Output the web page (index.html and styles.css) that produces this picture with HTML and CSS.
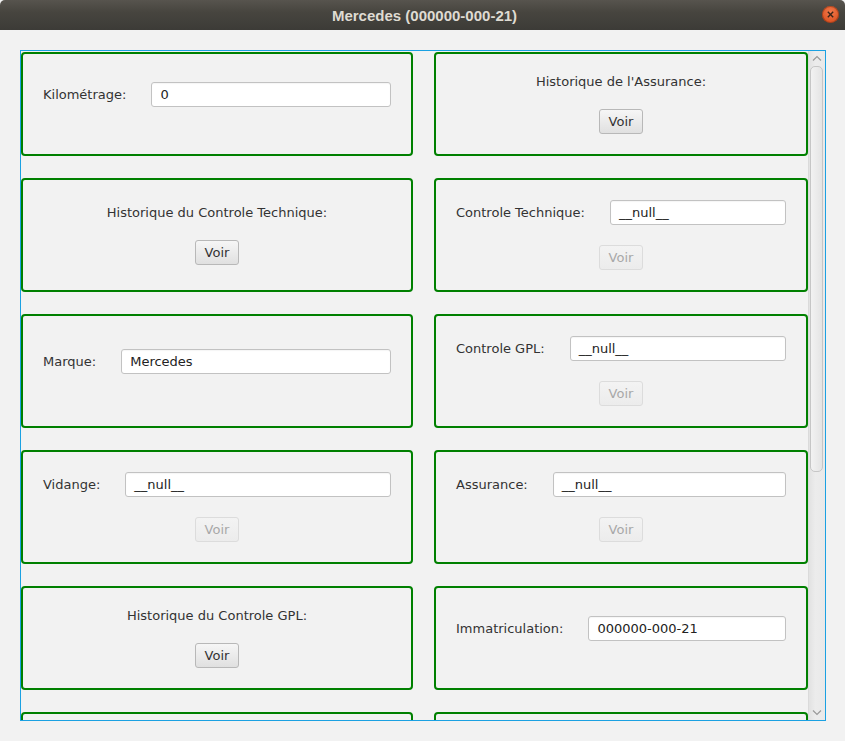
FILE: index.html
```html
<!DOCTYPE html>
<html lang="fr">
<head>
<meta charset="utf-8">
<title>Mercedes (000000-000-21)</title>
<link rel="stylesheet" href="styles.css">
</head>
<body>
<div class="window">
  <header class="titlebar">
    <span class="title">Mercedes (000000-000-21)</span>
    <span class="close"><svg width="17" height="17" viewBox="0 0 17 17"><line x1="5.8" y1="5.8" x2="11.2" y2="11.2" stroke="#3a2418" stroke-width="1.4"/><line x1="11.2" y1="5.8" x2="5.8" y2="11.2" stroke="#3a2418" stroke-width="1.4"/></svg></span>
  </header>
  <main class="content">
    <div class="scrollpane">
      <div class="viewport">
        <div class="grid">
          <section class="card">
            <div class="row"><span class="label">Kilométrage:</span><span class="input">0</span></div>
            <div class="ghost"></div>
          </section>
          <section class="card">
            <div class="heading">Historique de l'Assurance:</div>
            <div class="btn-row"><span class="btn">Voir</span></div>
          </section>

          <section class="card">
            <div class="heading">Historique du Controle Technique:</div>
            <div class="btn-row"><span class="btn">Voir</span></div>
          </section>
          <section class="card">
            <div class="row"><span class="label">Controle Technique:</span><span class="input">__null__</span></div>
            <div class="btn-row"><span class="btn disabled">Voir</span></div>
          </section>

          <section class="card">
            <div class="row"><span class="label">Marque:</span><span class="input">Mercedes</span></div>
            <div class="ghost"></div>
          </section>
          <section class="card">
            <div class="row"><span class="label">Controle GPL:</span><span class="input">__null__</span></div>
            <div class="btn-row"><span class="btn disabled">Voir</span></div>
          </section>

          <section class="card">
            <div class="row"><span class="label">Vidange:</span><span class="input">__null__</span></div>
            <div class="btn-row"><span class="btn disabled">Voir</span></div>
          </section>
          <section class="card">
            <div class="row"><span class="label">Assurance:</span><span class="input">__null__</span></div>
            <div class="btn-row"><span class="btn disabled">Voir</span></div>
          </section>

          <section class="card">
            <div class="heading">Historique du Controle GPL:</div>
            <div class="btn-row"><span class="btn">Voir</span></div>
          </section>
          <section class="card">
            <div class="row"><span class="label">Immatriculation:</span><span class="input">000000-000-21</span></div>
            <div class="ghost"></div>
          </section>

          <section class="card tall"></section>
          <section class="card tall"></section>
        </div>
      </div>
      <div class="scrollbar">
        <div class="arrow"><svg width="10" height="6" viewBox="0 0 10 6"><polyline points="1,5.5 5,1.5 9,5.5" fill="none" stroke="#9a9a9a" stroke-width="1.2"/></svg></div>
        <div class="track"><div class="thumb"></div></div>
        <div class="arrow"><svg width="10" height="6" viewBox="0 0 10 6"><polyline points="1,0.5 5,4.5 9,0.5" fill="none" stroke="#9a9a9a" stroke-width="1.2"/></svg></div>
      </div>
    </div>
  </main>
</div>
</body>
</html>
```
FILE: styles.css
```css
html, body {
  margin: 0;
  padding: 0;
}
body {
  width: 845px;
  height: 741px;
  overflow: hidden;
  background: #f2f2f2;
  font-family: "DejaVu Sans", "Noto Sans", sans-serif;
  font-size: 13px;
  color: #333333;
}
.window {
  display: flex;
  flex-direction: column;
  height: 741px;
}
.titlebar {
  position: relative;
  height: 30px;
  flex: none;
  display: flex;
  align-items: center;
  justify-content: center;
  background: linear-gradient(#57544e, #47453f 40%, #3c3b37);
  border-radius: 5px 5px 0 0;
}
.title {
  font-family: "Liberation Sans", Arial, sans-serif;
  font-weight: bold;
  font-size: 15px;
  color: #dfdbd2;
  padding-left: 4px;
  letter-spacing: 0;
}
.close {
  position: absolute;
  right: 6px;
  top: 6px;
  width: 17px;
  height: 17px;
  border-radius: 50%;
  background: radial-gradient(circle at 50% 35%, #f27a4c, #e05a2a 60%, #c9461c);
  box-shadow: inset 0 0 0 1px rgba(120, 40, 10, 0.45);
  display: flex;
}
.content {
  flex: 1;
  padding: 20px 19px 0 20px;
}
.scrollpane {
  height: 671px;
  box-sizing: border-box;
  border: 1px solid #1ba1e2;
  display: flex;
}
.viewport {
  flex: 1;
  overflow: hidden;
  padding-top: 1px;
}
.grid {
  display: grid;
  grid-template-columns: 392px 374px;
  column-gap: 21px;
  row-gap: 22px;
}
.card {
  border: 2px solid #008000;
  border-radius: 4px;
  padding: 20px;
  display: flex;
  flex-direction: column;
  justify-content: center;
  gap: 20px;
  min-height: 60px;
}
.card.tall {
  min-height: 70px;
}
.row {
  display: flex;
  align-items: center;
  gap: 25px;
}
.label {
  white-space: nowrap;
  flex: none;
}
.input {
  flex: 1;
  height: 25px;
  box-sizing: border-box;
  background: #ffffff;
  border: 1px solid #c2c2c2;
  border-radius: 3px;
  padding: 0 8px;
  display: flex;
  align-items: center;
  color: #222222;
  box-shadow: inset 0 1px 1px rgba(0, 0, 0, 0.04);
}
.ghost {
  height: 0;
}
.heading {
  text-align: center;
  line-height: 15px;
  height: 15px;
}
.btn-row {
  display: flex;
  justify-content: center;
}
.btn {
  width: 44px;
  height: 25px;
  box-sizing: border-box;
  border: 1px solid #b8b8b8;
  border-radius: 3px;
  background: linear-gradient(#f6f6f6, #e0e0e0);
  display: flex;
  align-items: center;
  justify-content: center;
  color: #333333;
}
.btn.disabled {
  color: #a8a8a8;
  border-color: #dcdcdc;
  background: linear-gradient(#f3f3f3, #ececec);
}
.scrollbar {
  width: 17px;
  flex: none;
  display: flex;
  flex-direction: column;
  background: linear-gradient(to right, #e2e2e2, #ececec 40%, #e9e9e9);
  border-left: 1px solid #dadada;
  box-sizing: border-box;
}
.arrow {
  height: 14px;
  display: flex;
  align-items: center;
  justify-content: center;
  flex: none;
}
.track {
  flex: 1;
  padding: 1px 2px 0 1px;
}
.thumb {
  height: 406px;
  box-sizing: border-box;
  border: 1px solid #c6c6c6;
  border-radius: 5px;
  background: linear-gradient(to right, #f2f2f2, #e4e4e4);
}
```
